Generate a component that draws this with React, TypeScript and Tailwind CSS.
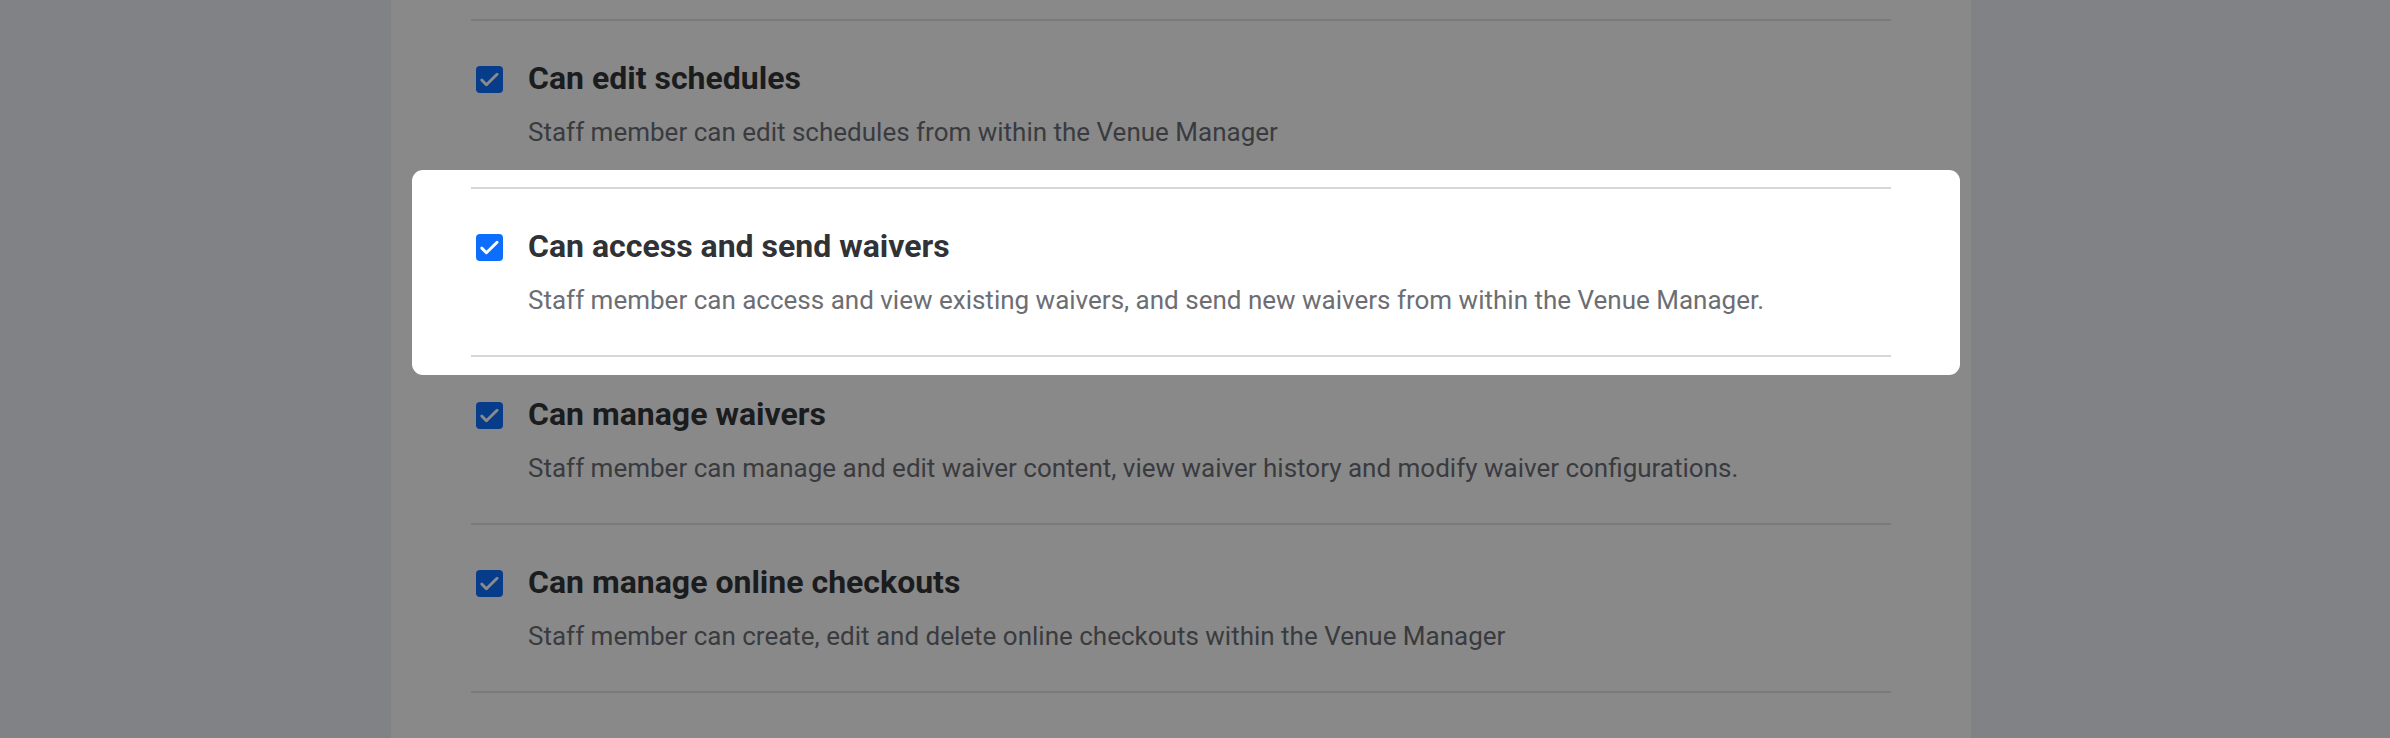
import { Fragment } from 'react'

type Permission = {
  title: string
  description: string
}

const permissions: Permission[] = [
  {
    title: 'Can edit schedules',
    description: 'Staff member can edit schedules from within the Venue Manager',
  },
  {
    title: 'Can access and send waivers',
    description:
      'Staff member can access and view existing waivers, and send new waivers from within the Venue Manager.',
  },
  {
    title: 'Can manage waivers',
    description:
      'Staff member can manage and edit waiver content, view waiver history and modify waiver configurations.',
  },
  {
    title: 'Can manage online checkouts',
    description: 'Staff member can create, edit and delete online checkouts within the Venue Manager',
  },
]

// index of the row that is spotlighted above the dimmed page
const FOCUSED = 1

function Check() {
  return (
    <svg viewBox="0 0 20 20" className="w-[27px] h-[27px]" fill="none">
      <path
        d="M4.3 10.5L7.7 13.9L15.6 6.1"
        stroke="currentColor"
        strokeWidth="2.2"
        strokeLinecap="round"
        strokeLinejoin="round"
      />
    </svg>
  )
}

function Divider({ lit }: { lit: boolean }) {
  return <div className={lit ? 'h-[2px] bg-[#d6d6d6]' : 'h-[2px] bg-[#7a7a7a]'} />
}

function Row({ item, lit }: { item: Permission; lit: boolean }) {
  return (
    <div className="flex flex-col pt-[35px] pb-[37px]">
      <div className="flex items-center h-[45px]">
        <span
          className={
            lit
              ? 'ml-[5px] mr-[25px] mt-[2px] w-[27px] h-[27px] rounded-[4px] bg-[#0d6efd] text-white flex items-center justify-center'
              : 'ml-[5px] mr-[25px] mt-[2px] w-[27px] h-[27px] rounded-[4px] bg-[#073c8a] text-[#8a8a8a] flex items-center justify-center'
          }
        >
          <Check />
        </span>
        <span
          className={
            lit
              ? 'text-[32px] leading-[45px] font-bold text-[#303236]'
              : 'text-[32px] leading-[45px] font-bold text-[#1b1c1e]'
          }
        >
          {item.title}
        </span>
      </div>
      <p
        className={
          lit
            ? 'mt-[13px] pl-[57px] text-[26px] leading-[36px] text-[#6c6e74]'
            : 'mt-[13px] pl-[57px] text-[26px] leading-[36px] text-[#3a3b3f]'
        }
      >
        {item.description}
      </p>
    </div>
  )
}

export default function App() {
  return (
    <div
      className="w-full h-[738px] overflow-hidden bg-[#818286] flex"
      style={{ fontFamily: 'Roboto, "Noto Sans", sans-serif' }}
    >
      <div className="w-[391px] shrink-0" />
      <div className="w-[1580px] shrink-0 bg-[#898989] px-[80px] pt-[19px]">
        <Divider lit={false} />
        {permissions.map((item, i) =>
          i === FOCUSED ? (
            <div
              key={item.title}
              className="relative -mt-[17px] -mb-[18px] -ml-[59px] -mr-[69px] pt-[17px] pb-[18px] pl-[59px] pr-[69px] bg-white rounded-[11px]"
            >
              <Divider lit />
              <Row item={item} lit />
              <Divider lit />
            </div>
          ) : (
            <Fragment key={item.title}>
              <Row item={item} lit={false} />
              {i + 1 !== FOCUSED && <Divider lit={false} />}
            </Fragment>
          )
        )}
      </div>
    </div>
  )
}
